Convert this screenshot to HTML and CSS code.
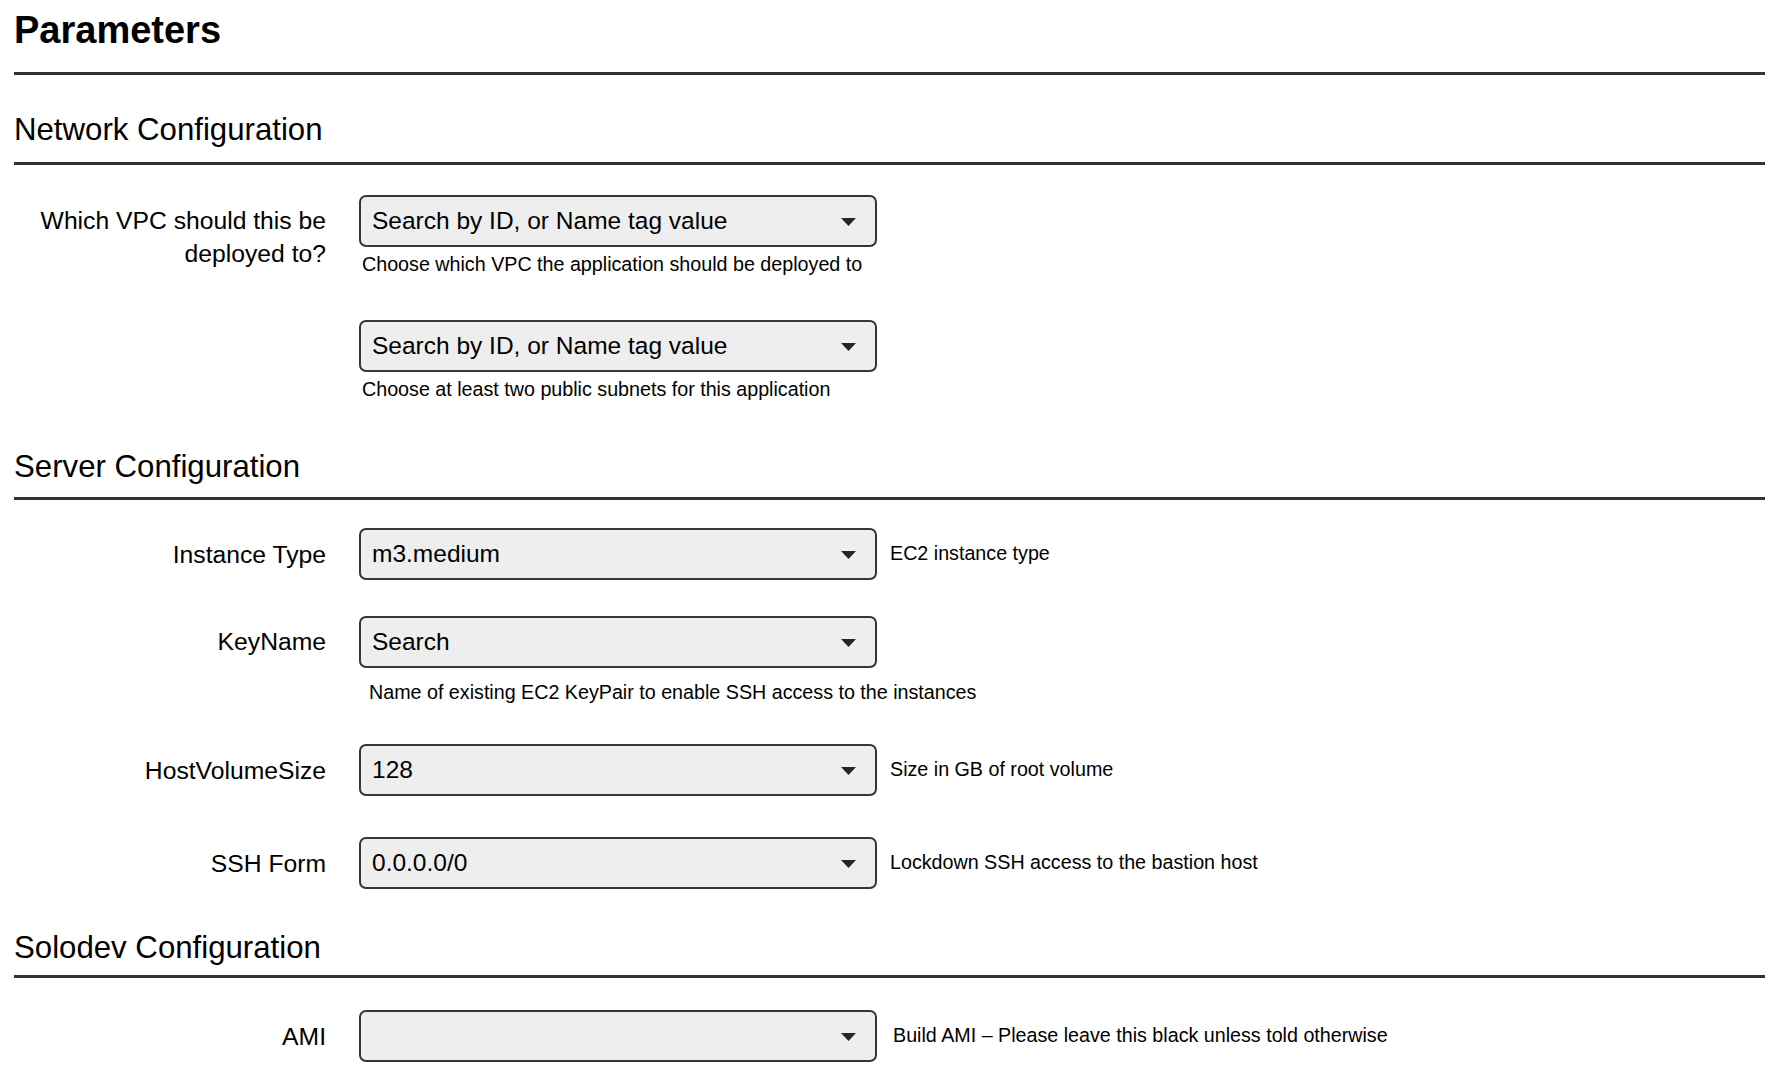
FILE: index.html
```html
<!DOCTYPE html>
<html lang="en">
<head>
<meta charset="utf-8">
<title>Parameters</title>
<link rel="stylesheet" href="styles.css">
</head>
<body>
<main class="page">
  <h1 class="title">Parameters</h1>

  <section class="section section--network">
    <h2 class="section-title">Network Configuration</h2>
    <div class="fields">
      <div class="field">
        <label class="label">Which VPC should this be<br>deployed to?</label>
        <div class="control">
          <div class="select"><span class="select-value">Search by ID, or Name tag value</span><svg class="caret" width="15" height="8" viewBox="0 0 15 8"><path d="M0 0H15L7.5 8Z"/></svg></div>
          <p class="help help--below">Choose which VPC the application should be deployed to</p>
        </div>
      </div>
      <div class="field field--subnets">
        <label class="label"></label>
        <div class="control">
          <div class="select"><span class="select-value">Search by ID, or Name tag value</span><svg class="caret" width="15" height="8" viewBox="0 0 15 8"><path d="M0 0H15L7.5 8Z"/></svg></div>
          <p class="help help--below">Choose at least two public subnets for this application</p>
        </div>
      </div>
    </div>
  </section>

  <section class="section section--server">
    <h2 class="section-title">Server Configuration</h2>
    <div class="fields">
      <div class="field field--inline">
        <label class="label">Instance Type</label>
        <div class="select"><span class="select-value">m3.medium</span><svg class="caret" width="15" height="8" viewBox="0 0 15 8"><path d="M0 0H15L7.5 8Z"/></svg></div>
        <p class="help help--side">EC2 instance type</p>
      </div>
      <div class="field field--key">
        <label class="label">KeyName</label>
        <div class="control">
          <div class="select"><span class="select-value">Search</span><svg class="caret" width="15" height="8" viewBox="0 0 15 8"><path d="M0 0H15L7.5 8Z"/></svg></div>
          <p class="help help--key">Name of existing EC2 KeyPair to enable SSH access to the instances</p>
        </div>
      </div>
      <div class="field field--inline field--volume">
        <label class="label">HostVolumeSize</label>
        <div class="select"><span class="select-value">128</span><svg class="caret" width="15" height="8" viewBox="0 0 15 8"><path d="M0 0H15L7.5 8Z"/></svg></div>
        <p class="help help--side">Size in GB of root volume</p>
      </div>
      <div class="field field--inline field--ssh">
        <label class="label">SSH Form</label>
        <div class="select"><span class="select-value">0.0.0.0/0</span><svg class="caret" width="15" height="8" viewBox="0 0 15 8"><path d="M0 0H15L7.5 8Z"/></svg></div>
        <p class="help help--side">Lockdown SSH access to the bastion host</p>
      </div>
    </div>
  </section>

  <section class="section section--solodev">
    <h2 class="section-title">Solodev Configuration</h2>
    <div class="fields">
      <div class="field field--inline">
        <label class="label">AMI</label>
        <div class="select"><span class="select-value"></span><svg class="caret" width="15" height="8" viewBox="0 0 15 8"><path d="M0 0H15L7.5 8Z"/></svg></div>
        <p class="help help--side help--ami">Build AMI – Please leave this black unless told otherwise</p>
      </div>
    </div>
  </section>
</main>
</body>
</html>
```

FILE: styles.css
```css
* {
  box-sizing: border-box;
}

html, body {
  margin: 0;
  padding: 0;
  background: #ffffff;
}

body {
  font-family: "Liberation Sans", Arial, Helvetica, sans-serif;
  color: #000000;
}

.page {
  padding: 0 15px 0 14px;
}

.title {
  margin: 0;
  font-size: 38px;
  font-weight: 700;
  line-height: 46px;
  padding: 7px 0 19px;
  border-bottom: 3px solid #333333;
}

.section-title {
  margin: 0;
  font-size: 31.2px;
  font-weight: 400;
  line-height: 38px;
  padding-bottom: 11px;
  border-bottom: 3px solid #333333;
}

.section--network .section-title {
  margin-top: 36px;
  padding-bottom: 13px;
}

.section--server .section-title {
  margin-top: 47px;
}

.section--solodev .section-title {
  margin-top: 40px;
  padding-bottom: 8px;
}

.section--network .fields {
  padding-top: 30px;
}

.section--server .fields {
  padding-top: 28px;
}

.section--solodev .fields {
  padding-top: 32px;
}

.field {
  display: flex;
  align-items: flex-start;
  gap: 33px;
}

.field--inline {
  align-items: center;
}

.field--subnets {
  margin-top: 44px;
}

.field--key {
  margin-top: 36px;
}

.field--volume {
  margin-top: 40px;
}

.field--ssh {
  margin-top: 41px;
}

.label {
  flex: 0 0 312px;
  width: 312px;
  text-align: right;
  font-size: 24.7px;
  line-height: 33px;
  padding-top: 9px;
}

.field--inline .label {
  padding-top: 0;
}

.control {
  display: flex;
  flex-direction: column;
}

.select {
  width: 518px;
  height: 52px;
  flex: 0 0 auto;
  display: flex;
  align-items: center;
  justify-content: space-between;
  padding: 0 19px 0 11px;
  background: #eeeeee;
  border: 2px solid #363636;
  border-radius: 7px;
}

.select-value {
  font-size: 24.5px;
  line-height: 28px;
  white-space: nowrap;
}

.caret {
  display: block;
  margin-top: 2px;
  fill: #262626;
}

.help {
  margin: 0;
  font-size: 19.7px;
  line-height: 24px;
  white-space: nowrap;
}

.help--below {
  margin-top: 5px;
  padding-left: 3px;
}

.help--key {
  margin-top: 12px;
  padding-left: 10px;
}

.help--side {
  margin-left: -20px;
  margin-top: -2px;
}

.help--ami {
  margin-left: -17px;
}
```
